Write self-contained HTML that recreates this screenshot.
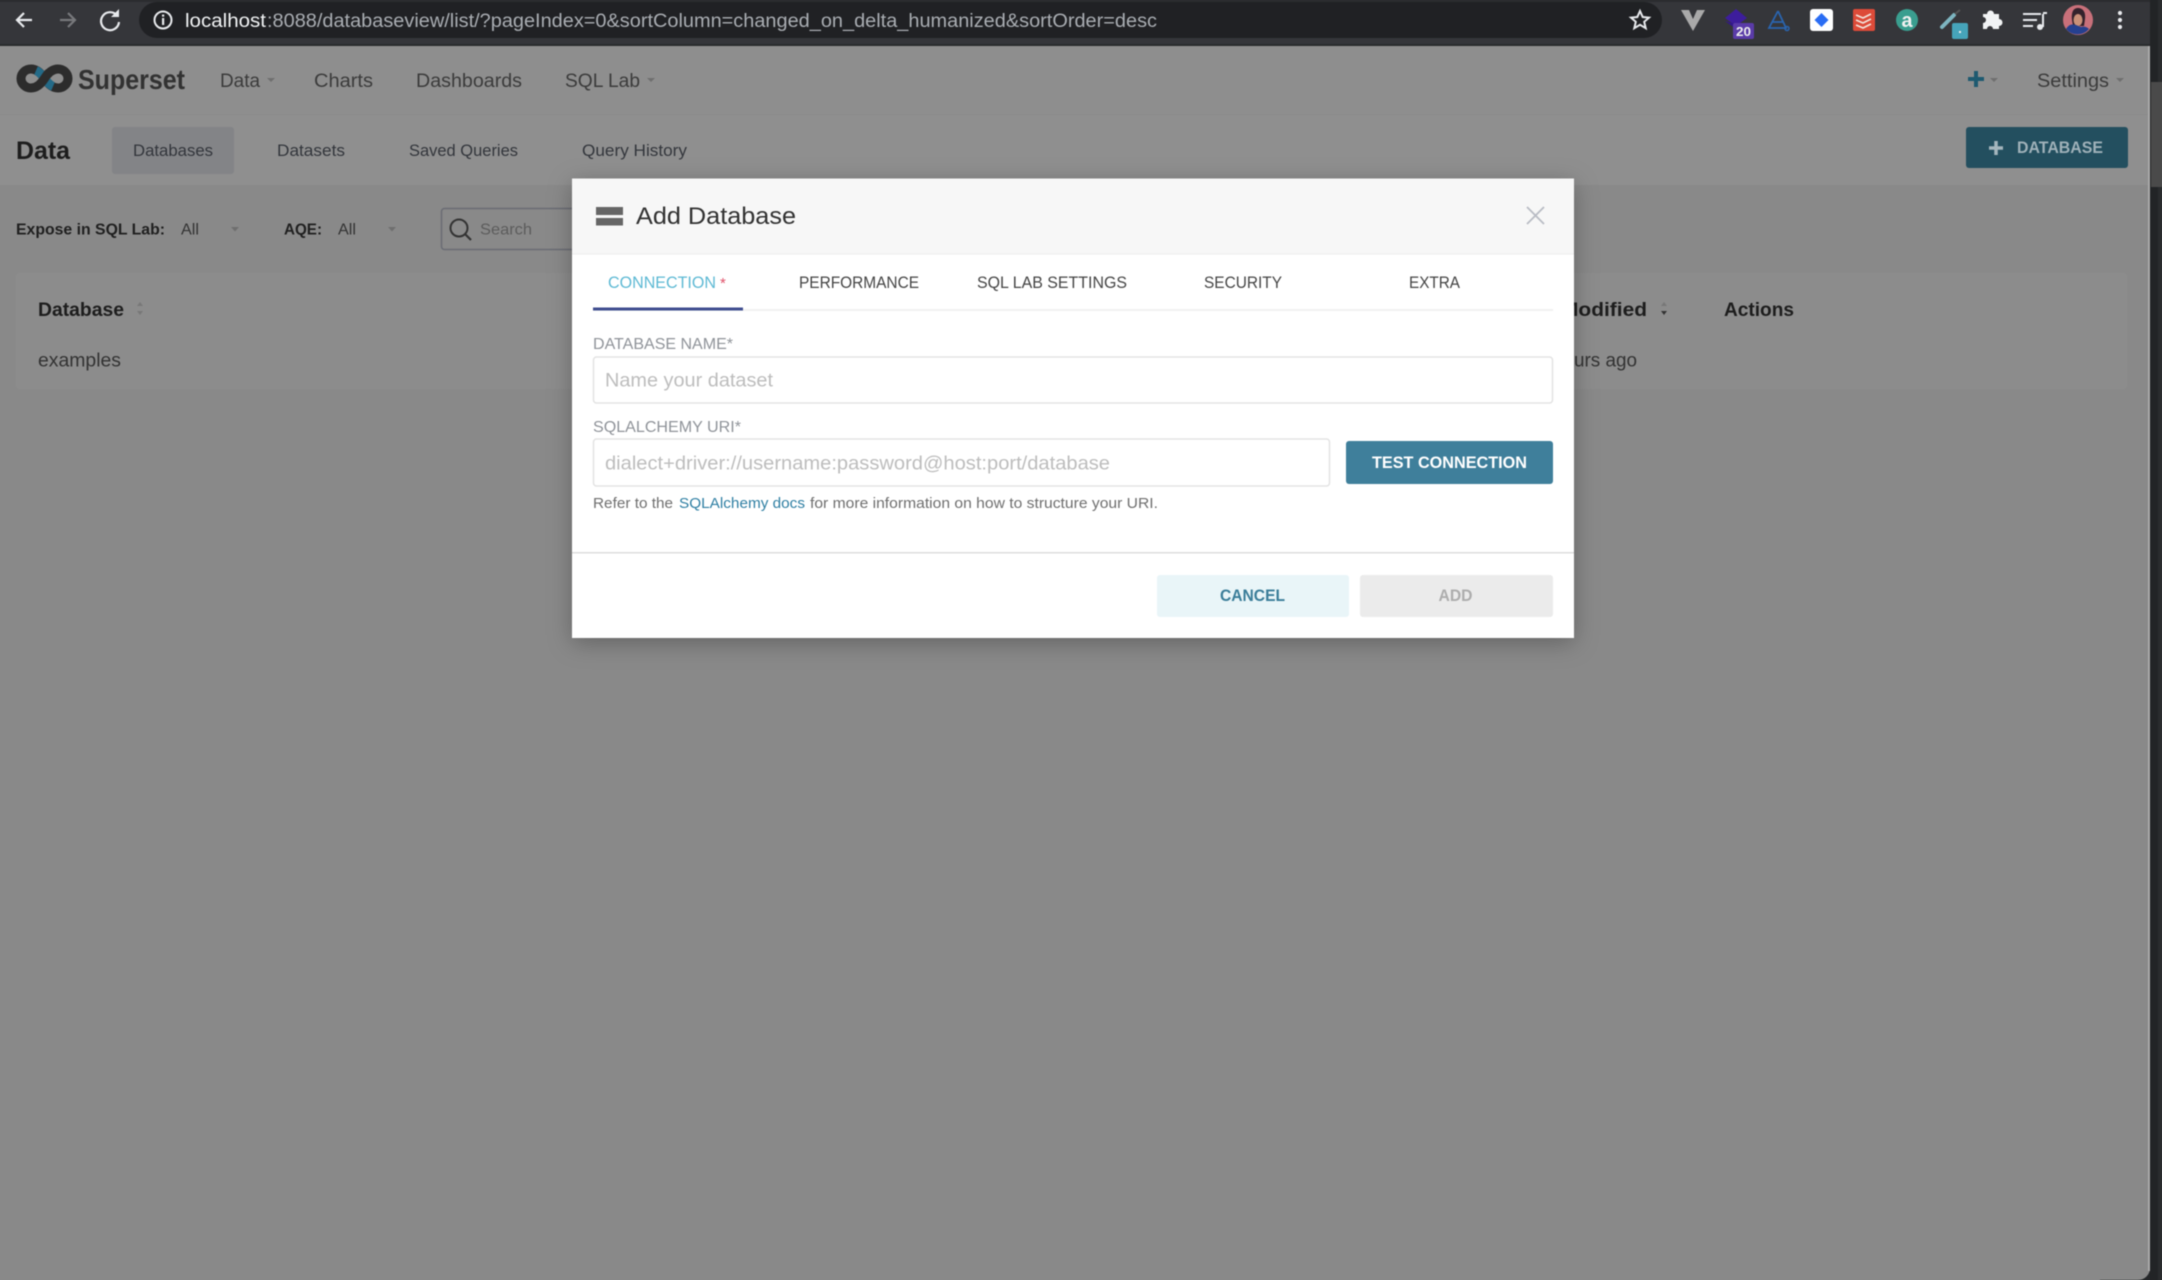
<!DOCTYPE html>
<html><head><meta charset="utf-8"><title>Superset</title>
<style>
html,body{margin:0;padding:0;width:2162px;height:1280px;overflow:hidden;background:#898989}
svg{display:block;margin:-10px 0 0 -10px;filter:blur(.45px)}
text{font-family:"Liberation Sans",sans-serif;white-space:pre}
</style></head><body>
<svg xmlns="http://www.w3.org/2000/svg" width="2182" height="1300" viewBox="-10 -10 2182 1300">
<defs><filter id="s" x="-10%" y="-15%" width="120%" height="130%"><feDropShadow dx="0" dy="5" stdDeviation="12" flood-color="#000" flood-opacity=".28"/></filter></defs>
<!-- window -->
<rect x="-10" y="-10" width="2182" height="1300" fill="#26282a"/>
<rect x="2150" y="-10" width="22" height="1300" fill="#222426"/>
<rect x="2158" y="-10" width="14" height="1300" fill="#2a2c2e"/>
<rect x="2151" y="82" width="21" height="105" fill="#4a4a4a"/>
<path d="M-10 46H2150V1268a12 12 0 0 1-12 12H2100V1290H-10Z" fill="#898989"/>
<rect x="2148" y="46" width="2" height="1225" fill="#aaa"/>
<rect x="-10" y="46" width="2158" height="68" fill="#8e8e8e"/>
<rect x="-10" y="114" width="2158" height="1" fill="#8a8a8a"/>
<rect x="-10" y="115" width="2158" height="70" fill="#8f8f8f"/>
<!-- chrome bar -->
<rect x="-10" y="-10" width="2160" height="55" fill="#35363a"/>
<rect x="-10" y="-10" width="2160" height="12" fill="#2b2c2f"/>
<rect x="-10" y="44" width="2160" height="2" fill="#2a2b2d"/>
<rect x="139" y="2" width="1523" height="36" rx="18" fill="#202124"/>
<path d="M32 20H18M24 13l-7 7 7 7" fill="none" stroke="#e8eaed" stroke-width="2.2"/>
<path d="M60 20H74M68 13l7 7-7 7" fill="none" stroke="#77787b" stroke-width="2.2"/>
<path d="M117 15.500A9 9 0 1 0 119 22" fill="none" stroke="#e8eaed" stroke-width="2.2"/><path d="M119 9v8h-8Z" fill="#e8eaed"/>
<circle cx="163" cy="20" r="8.500" fill="none" stroke="#e8eaed" stroke-width="2"/><rect x="162" y="18" width="2.2" height="7" fill="#e8eaed"/><rect x="162" y="14.500" width="2.2" height="2.2" fill="#e8eaed"/>
<text x="185" y="27" font-size="19" fill="#f1f3f4" textLength="81" lengthAdjust="spacingAndGlyphs">localhost</text>
<text x="267" y="27" font-size="19" fill="#a9adb2" textLength="890" lengthAdjust="spacingAndGlyphs">:8088/databaseview/list/?pageIndex=0&amp;sortColumn=changed_on_delta_humanized&amp;sortOrder=desc</text>
<path d="M1640 11l2.700 6 6.300.6-4.800 4.200 1.500 6.400-5.700-3.400-5.700 3.400 1.500-6.400-4.800-4.200 6.300-.6Z" fill="none" stroke="#e8eaed" stroke-width="2"/>
<!-- extensions -->
<path d="M1681 10h8l4 9 4-9h8l-12 21Z" fill="#a9a9a9"/>
<path d="M1736 9l11 9-11 8-11-8Z" fill="#3d1d9c"/><path d="M1725 21l11 8 5-2v-4h-9Z" fill="#32178a"/>
<rect x="1733" y="23" width="21" height="16" rx="2" fill="#5a3ba8"/>
<text x="1736" y="36" font-size="13" font-weight="bold" fill="#eee" textLength="15" lengthAdjust="spacingAndGlyphs">20</text>
<path d="M1778 11l-9 17h17l-8-17M1772 22h11" fill="none" stroke="#2a64ae" stroke-width="1.800"/><circle cx="1787" cy="28.500" r="2" fill="none" stroke="#2a64ae" stroke-width="1.500"/>
<rect x="1810" y="9" width="23" height="22" rx="3" fill="#fff"/><path d="M1821.500 13l7 7-7 7-7-7Z" fill="#2a6df4"/>
<rect x="1853" y="9" width="22" height="22" rx="2" fill="#dd4b39"/><path d="M1856 15l7 3 8-4M1856 20l7 3 8-4M1856 25l7 3 8-4" fill="none" stroke="#f3e5dd" stroke-width="1.700"/>
<circle cx="1907" cy="20" r="11" fill="#3a9e8f"/><text x="1901.500" y="27" font-size="20" font-weight="bold" fill="#f1f1f1" textLength="11" lengthAdjust="spacingAndGlyphs">a</text>
<path d="M1942 27l12-12" stroke="#7db5c0" stroke-width="4" stroke-linecap="round"/><path d="M1955 14l5-4" stroke="#555" stroke-width="2"/>
<rect x="1952" y="23" width="16" height="16" rx="2" fill="#46a4ba"/><rect x="1959" y="31" width="2" height="2" fill="#eee"/>
<path d="M1983 14h4a3.500 3.500 0 0 1 7 0h5v5a3.500 3.500 0 0 1 0 7v3h-6a3 3 0 0 0-6 0h-4v-6a3 3 0 0 0 0-6Z" fill="#f1f3f4"/>
<path d="M2023 14h18M2023 20h14M2023 26h10" stroke="#e8eaed" stroke-width="2"/><path d="M2043 14v13" stroke="#e8eaed" stroke-width="2"/><circle cx="2040" cy="27" r="3" fill="#e8eaed"/><path d="M2043 13h4" stroke="#e8eaed" stroke-width="2"/>
<circle cx="2078" cy="20" r="15" fill="#c8707a"/>
<path d="M2072 20c-1-9 2-12 6-12s8 3 7 11l-1 7h-11Z" fill="#33222c"/>
<ellipse cx="2078" cy="20" rx="4.500" ry="6" fill="#c99078"/>
<path d="M2066 29c3-5 6-5 10-4l5 2c3-1 6 0 8 2a15 15 0 0 1-23 0Z" fill="#26408f"/>
<circle cx="2120" cy="13" r="2.100" fill="#e8eaed"/><circle cx="2120" cy="20" r="2.100" fill="#e8eaed"/><circle cx="2120" cy="27" r="2.100" fill="#e8eaed"/>
<!-- logo -->
<path d="M31 69C37 69 41 73 44.500 78.500C48 84 52 88 58 88A10 9.500 0 0 0 58 69C52 69 48 73 44.500 78.500C41 84 37 88 31 88A10 9.500 0 0 1 31 69Z" fill="none" stroke="#2c2c2c" stroke-width="9"/>
<path d="M36 70.500C39.500 72 42 75 44.500 78.500C47 82 49.500 85 53 86.500" fill="none" stroke="#246a87" stroke-width="9"/>
<path d="M40 84C42 82 43 81 44.500 78.500C46 76 47.500 74 49 72.500" fill="none" stroke="#2c2c2c" stroke-width="9"/>
<text x="78" y="89" font-size="28" font-weight="bold" fill="#323232" textLength="107" lengthAdjust="spacingAndGlyphs">Superset</text>
<!-- nav -->
<g font-size="19" fill="#3b3b3b">
<text x="220" y="87" textLength="40" lengthAdjust="spacingAndGlyphs">Data</text>
<text x="314" y="87" textLength="59" lengthAdjust="spacingAndGlyphs">Charts</text>
<text x="416" y="87" textLength="106" lengthAdjust="spacingAndGlyphs">Dashboards</text>
<text x="565" y="87" textLength="75" lengthAdjust="spacingAndGlyphs">SQL Lab</text>
<text x="2037" y="87" textLength="72" lengthAdjust="spacingAndGlyphs">Settings</text>
</g>
<g fill="#6f6f6f"><path d="M267 78h8l-4 4Z"/><path d="M647 78h8l-4 4Z"/><path d="M2116 78h8l-4 4Z"/><path d="M1990 78h8l-4 4Z"/></g>
<path d="M1976 71v16M1968 79h16" stroke="#1e5a70" stroke-width="4"/>
<!-- subnav -->
<text x="16" y="159" font-size="25" font-weight="bold" fill="#1d1d1d" textLength="54" lengthAdjust="spacingAndGlyphs">Data</text>
<rect x="112" y="127" width="122" height="47" rx="3" fill="#838487"/>
<g font-size="16.500" fill="#33363c">
<text x="133" y="156" textLength="80" lengthAdjust="spacingAndGlyphs">Databases</text>
<text x="277" y="156" textLength="68" lengthAdjust="spacingAndGlyphs">Datasets</text>
<text x="409" y="156" textLength="109" lengthAdjust="spacingAndGlyphs">Saved Queries</text>
<text x="582" y="156" textLength="105" lengthAdjust="spacingAndGlyphs">Query History</text>
</g>
<rect x="1966" y="127" width="162" height="41" rx="3" fill="#234f5f"/>
<path d="M1996 141v14M1989 148h14" stroke="#a5b6bd" stroke-width="3.500"/>
<text x="2017" y="153" font-size="16.500" font-weight="bold" fill="#9fb1b9" textLength="86" lengthAdjust="spacingAndGlyphs">DATABASE</text>
<!-- filters -->
<text x="16" y="234.500" font-size="15.500" font-weight="bold" fill="#1f1f1f" textLength="149" lengthAdjust="spacingAndGlyphs">Expose in SQL Lab:</text>
<text x="181" y="234.500" font-size="15.500" fill="#333" textLength="18" lengthAdjust="spacingAndGlyphs">All</text>
<path d="M231 227h8l-4 4.500Z" fill="#6f6f6f"/>
<text x="284" y="234.500" font-size="15.500" font-weight="bold" fill="#1f1f1f" textLength="38" lengthAdjust="spacingAndGlyphs">AQE:</text>
<text x="338" y="234.500" font-size="15.500" fill="#333" textLength="18" lengthAdjust="spacingAndGlyphs">All</text>
<path d="M388 227h8l-4 4.500Z" fill="#6f6f6f"/>
<rect x="441.500" y="208.500" width="150" height="41" rx="3" fill="none" stroke="#6a6c74" stroke-width="1.500"/>
<circle cx="459" cy="228" r="8.500" fill="none" stroke="#333" stroke-width="2"/><path d="M465 234l6 6" stroke="#333" stroke-width="2.200"/>
<text x="480" y="234.500" font-size="16" fill="#5c5c5c" textLength="52" lengthAdjust="spacingAndGlyphs">Search</text>
<!-- table -->
<rect x="16" y="273" width="2111" height="116" rx="3" fill="#8c8c8c"/>
<text x="38" y="316" font-size="19" font-weight="bold" fill="#1d1d1d" textLength="86" lengthAdjust="spacingAndGlyphs">Database</text>
<path d="M137 306h6l-3-4ZM137 311h6l-3 4Z" fill="#777"/>
<text x="38" y="366.500" font-size="19" fill="#333" textLength="83" lengthAdjust="spacingAndGlyphs">examples</text>
<text x="1561" y="316" font-size="19" font-weight="bold" fill="#1d1d1d" textLength="86" lengthAdjust="spacingAndGlyphs">Modified</text>
<path d="M1661 306h6l-3-4Z" fill="#777"/><path d="M1661 311h6l-3 4Z" fill="#333"/>
<text x="1724" y="316" font-size="19" font-weight="bold" fill="#1d1d1d" textLength="70" lengthAdjust="spacingAndGlyphs">Actions</text>
<text x="1553" y="366.500" font-size="19" fill="#333" textLength="84" lengthAdjust="spacingAndGlyphs">hours ago</text>
<!-- modal -->
<rect x="572" y="178.500" width="1002" height="459.500" fill="#fff" filter="url(#s)"/>
<rect x="572" y="178.500" width="1002" height="75" fill="#f7f7f7"/>
<rect x="572" y="253.500" width="1002" height="1" fill="#eee"/>
<rect x="596" y="207" width="27" height="8" fill="#666"/><rect x="596" y="218" width="27" height="7.500" fill="#666"/>
<text x="636" y="224" font-size="24" fill="#323232" textLength="160" lengthAdjust="spacingAndGlyphs">Add Database</text>
<path d="M1527 207l17 17M1544 207l-17 17" stroke="#b9bcc4" stroke-width="1.800"/>
<g font-size="16.500" fill="#454545">
<text x="608" y="288" fill="#5db9d4" textLength="108" lengthAdjust="spacingAndGlyphs">CONNECTION</text>
<text x="720" y="288" fill="#e0526a" font-size="15">*</text>
<text x="799" y="288" textLength="120" lengthAdjust="spacingAndGlyphs">PERFORMANCE</text>
<text x="977" y="288" textLength="150" lengthAdjust="spacingAndGlyphs">SQL LAB SETTINGS</text>
<text x="1204" y="288" textLength="78" lengthAdjust="spacingAndGlyphs">SECURITY</text>
<text x="1409" y="288" textLength="51" lengthAdjust="spacingAndGlyphs">EXTRA</text>
</g>
<rect x="593" y="309" width="960" height="2" fill="#f1f1f1"/>
<rect x="593" y="307.500" width="150" height="3" fill="#3f4d8f"/>
<text x="593" y="349" font-size="16" fill="#8f9399" textLength="140" lengthAdjust="spacingAndGlyphs">DATABASE NAME*</text>
<rect x="593.500" y="357" width="959" height="46" rx="3" fill="#fff" stroke="#e3e3e3" stroke-width="1.500"/>
<text x="605" y="386.500" font-size="19.500" fill="#bdbdbd" textLength="168" lengthAdjust="spacingAndGlyphs">Name your dataset</text>
<text x="593" y="432" font-size="16" fill="#8f9399" textLength="148" lengthAdjust="spacingAndGlyphs">SQLALCHEMY URI*</text>
<rect x="593.500" y="439" width="736" height="47" rx="3" fill="#fff" stroke="#e3e3e3" stroke-width="1.500"/>
<text x="605" y="469.500" font-size="19.500" fill="#bdbdbd" textLength="505" lengthAdjust="spacingAndGlyphs">dialect+driver://username:password@host:port/database</text>
<rect x="1346" y="441" width="207" height="43" rx="3" fill="#3f7f9b"/>
<text x="1372" y="468" font-size="16.500" font-weight="bold" fill="#fff" textLength="155" lengthAdjust="spacingAndGlyphs">TEST CONNECTION</text>
<text x="593" y="508" font-size="14.500" fill="#6f6f6f" textLength="80" lengthAdjust="spacingAndGlyphs">Refer to the</text>
<text x="679" y="508" font-size="14.500" fill="#2f7fa3" textLength="126" lengthAdjust="spacingAndGlyphs">SQLAlchemy docs</text>
<text x="810" y="508" font-size="14.500" fill="#6f6f6f" textLength="348" lengthAdjust="spacingAndGlyphs">for more information on how to structure your URI.</text>
<rect x="572" y="552" width="1002" height="1.500" fill="#dedede"/>
<rect x="1157" y="575" width="192" height="42" rx="3" fill="#e9f5f8"/>
<text x="1220" y="601" font-size="16.500" font-weight="bold" fill="#3a7d99" textLength="65" lengthAdjust="spacingAndGlyphs">CANCEL</text>
<rect x="1360" y="575" width="193" height="42" rx="3" fill="#ebebeb"/>
<text x="1438.500" y="601" font-size="16.500" font-weight="bold" fill="#adadad" textLength="34" lengthAdjust="spacingAndGlyphs">ADD</text>
</svg>
</body></html>
